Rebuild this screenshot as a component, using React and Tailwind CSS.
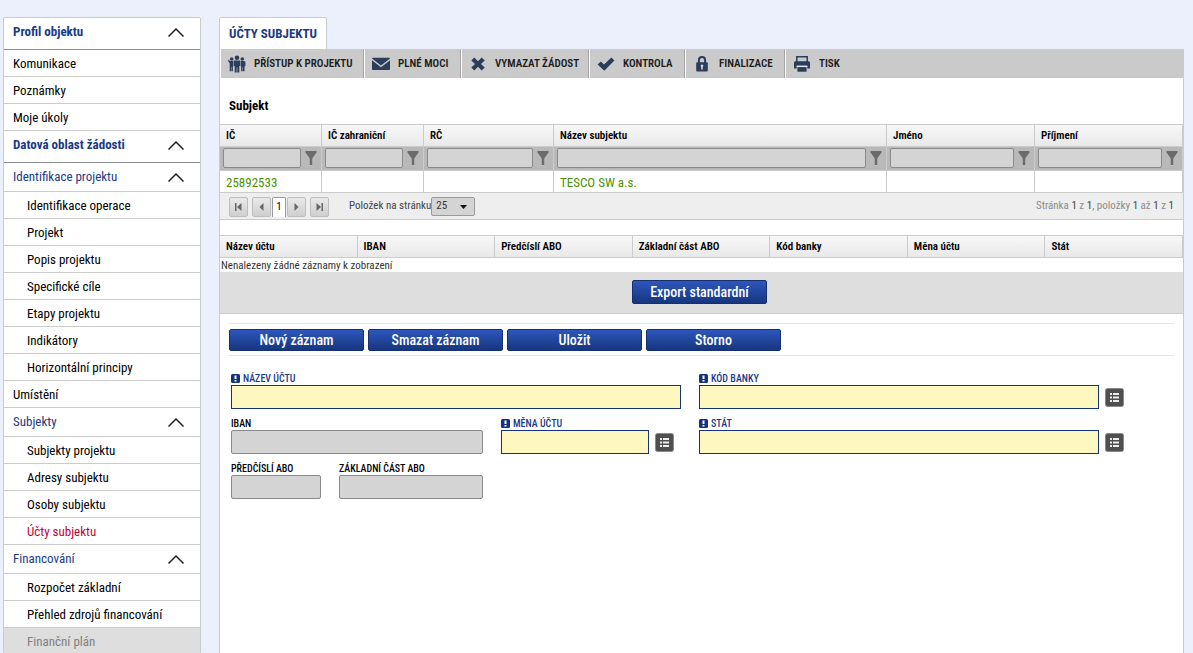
const menu = [
  { type: "root", label: "Profil objektu" },
  { type: "item", label: "Komunikace" },
  { type: "item", label: "Poznámky" },
  { type: "item", label: "Moje úkoly" },
  { type: "root", label: "Datová oblast žádosti" },
  { type: "group", label: "Identifikace projektu" },
  { type: "sub", label: "Identifikace operace" },
  { type: "sub", label: "Projekt" },
  { type: "sub", label: "Popis projektu" },
  { type: "sub", label: "Specifické cíle" },
  { type: "sub", label: "Etapy projektu" },
  { type: "sub", label: "Indikátory" },
  { type: "sub", label: "Horizontální principy" },
  { type: "item", label: "Umístění" },
  { type: "group", label: "Subjekty" },
  { type: "sub", label: "Subjekty projektu" },
  { type: "sub", label: "Adresy subjektu" },
  { type: "sub", label: "Osoby subjektu" },
  { type: "active", label: "Účty subjektu" },
  { type: "group", label: "Financování" },
  { type: "sub", label: "Rozpočet základní" },
  { type: "sub", label: "Přehled zdrojů financování" },
  { type: "disabled", label: "Finanční plán" },
];

const menuStyles = {
  root: "h-8 pl-[9px] pb-[3px] font-bold text-[#1b3a85] border-[#8c8c8c]",
  group: "h-[29px] pl-[9px] text-[#1b3a85] border-[#cbcbcb]",
  item: "h-[27px] pt-px pl-[9px] text-black border-[#cbcbcb]",
  sub: "h-[27px] pt-px pl-[23px] text-black border-[#cbcbcb]",
  active: "h-[27px] pt-px pl-[23px] text-[#cc0033] border-[#cbcbcb]",
  disabled: "h-[27px] pt-px pl-[23px] text-[#808080] bg-[#dedede] border-[#cbcbcb]",
};

const subjectColumns = [
  { label: "IČ", width: "w-[102px]", value: "25892533" },
  { label: "IČ zahraniční", width: "w-[102px]" },
  { label: "RČ", width: "w-[130px]" },
  { label: "Název subjektu", value: "TESCO SW a.s." },
  { label: "Jméno", width: "w-[148px]" },
  { label: "Příjmení", width: "w-[148px]" },
];

const accountColumns = [
  "Název účtu", "IBAN", "Předčíslí ABO", "Základní část ABO", "Kód banky", "Měna účtu", "Stát",
];

function PeopleIcon() {
  return (
    <svg width="18" height="18" viewBox="0 0 18 18" fill="#2b3d5b">
      <circle cx="9" cy="2.8" r="2.3" />
      <path d="M5.700 5.400h6.600v5.600h-1V17.500H9.300v-5h-.6v5H6.700V11h-1z" />
      <circle cx="3.700" cy="4" r="1.800" />
      <circle cx="14.300" cy="4" r="1.800" />
      <path d="M.3 4.400l1.900 1.500h3v5.500h-.3v4.800H3.400V12H3v4.200H1.700V8.200L.3 6.500z" />
      <path d="M12.800 5.900h3.200l1.400.8v4.500h-.9v5H15V12h-.4v4.200h-1.500v-4.800h-.3z" />
    </svg>
  );
}

function MailIcon() {
  return (
    <svg width="18" height="18" viewBox="0 0 18 18" fill="#2b3d5b">
      <path d="M0 3.400C0 3 .4 2.800.8 2.800h16.400c.4 0 .8.200.8.600L9 10.400z" />
      <path d="M0 5.200l9 7 9-7V14c0 .6-.4 1-1 1H1c-.6 0-1-.4-1-1z" />
    </svg>
  );
}

function CrossIcon() {
  return (
    <svg width="18" height="18" viewBox="0 0 18 18" fill="#2b3d5b">
      <path d="M5.300 2.600L9 6.200l3.700-3.600 3 2.900L12 9l3.700 3.500-3 2.900L9 11.800l-3.700 3.600-3-2.900L6 9 2.300 5.500z" />
    </svg>
  );
}

function CheckIcon() {
  return (
    <svg width="18" height="18" viewBox="0 0 18 18" fill="#2b3d5b">
      <path d="M.6 9.400l3.200-2.800L7 9.600l7.400-7 3 2.900L7.300 15.800z" />
    </svg>
  );
}

function LockIcon() {
  return (
    <svg width="18" height="18" viewBox="0 0 18 18">
      <path d="M5.900 8V5.200a3.100 3.100 0 0 1 6.200 0V8" fill="none" stroke="#2b3d5b" strokeWidth="2" />
      <rect x="3.200" y="7.200" width="11.600" height="9.400" rx="1" fill="#2b3d5b" />
      <path d="M9 9.400a1.400 1.400 0 0 1 .8 2.500V14.500H8.200v-2.600A1.400 1.400 0 0 1 9 9.400z" fill="#d5d5d5" />
    </svg>
  );
}

function PrintIcon() {
  return (
    <svg width="18" height="18" viewBox="0 0 18 18">
      <path d="M3.800 7V1.800h10.400V7" fill="#c3cad4" stroke="#2b3d5b" strokeWidth="1.500" />
      <path d="M2.600 6.300h12.800c1 0 1.600.7 1.600 1.600v5.600h-2.700V11H3.700v2.500H1V7.900c0-.9.600-1.600 1.600-1.600z" fill="#2b3d5b" />
      <path d="M3.700 10.600h10.600v1.500H3.700z" fill="#e8e8e8" />
      <path d="M4.400 12.100h9.200v4.600H4.400z" fill="#2b3d5b" />
    </svg>
  );
}

function FilterIcon() {
  return (
    <svg width="12" height="14" viewBox="0 0 12 14" fill="#6b6b6b">
      <path d="M.5 0h11v1.500L7.200 7.500V14H4.800V7.500L.5 1.500z" />
    </svg>
  );
}

const tools = [
  { label: "PŘÍSTUP K PROJEKTU", Icon: PeopleIcon, width: "w-[144px]" },
  { label: "PLNÉ MOCI", Icon: MailIcon, width: "w-[97px]" },
  { label: "VYMAZAT ŽÁDOST", Icon: CrossIcon, width: "w-32" },
  { label: "KONTROLA", Icon: CheckIcon, width: "w-24" },
  { label: "FINALIZACE", Icon: LockIcon, width: "w-[100px]" },
  { label: "TISK", Icon: PrintIcon, width: "w-24", last: true },
];

function Chevron() {
  return (
    <svg width="16" height="9" viewBox="0 0 16 9" fill="none" stroke="#222" strokeWidth="1.500">
      <path d="M.5 8.500L8 1l7.500 7.500" />
    </svg>
  );
}

function Sidebar() {
  return (
    <aside className="w-[198px] shrink-0 bg-white border border-[#cbcbcb] rounded-t-[2px]">
      <nav>
        {menu.map(({ type, label }) => (
          <a
            key={label}
            href="#"
            className={`flex items-center justify-between pr-4 border-b text-[13px] ${menuStyles[type]}`}
          >
            {label}
            {(type === "root" || type === "group") && <Chevron />}
          </a>
        ))}
      </nav>
    </aside>
  );
}

function Toolbar() {
  return (
    <div className="flex h-[29px] bg-[#cacaca]">
      {tools.map(({ label, Icon, width, last }) => (
        <button
          key={label}
          className={`flex items-center gap-2 pt-px pl-[7px] border-l border-l-white text-[11px] font-semibold text-[#1c1c1c] whitespace-nowrap ${width} ${last ? "" : "border-r border-r-[#a5a5a5]"}`}
        >
          <Icon />
          {label}
        </button>
      ))}
    </div>
  );
}

const headCell = "h-[23px] pt-[2px] pl-[6px] text-left text-[11px] font-semibold text-black border-r border-y border-[#cbcbcb]";

function SubjectTable() {
  return (
    <table className="w-full table-fixed border-separate border-spacing-0">
      <thead>
        <tr className="bg-linear-to-b from-[#f8f8f8] to-[#e8e8e8]">
          {subjectColumns.map((c) => (
            <th key={c.label} className={`${headCell} ${c.width || ""}`}>{c.label}</th>
          ))}
        </tr>
        <tr className="bg-[#b9b9b9]">
          {subjectColumns.map((c) => (
            <td key={c.label} className="h-6 pt-px pl-[3px] pr-1 align-top border-r border-b border-[#cbcbcb]">
              <div className="flex items-center gap-1">
                <input
                  aria-label={`Filtr ${c.label}`}
                  className="h-5 flex-1 min-w-0 px-1 text-[11px] bg-[#d4d4d4] border border-[#8a8a8a] rounded-[2px]"
                />
                <button title="Filtrovat">
                  <FilterIcon />
                </button>
              </div>
            </td>
          ))}
        </tr>
      </thead>
      <tbody>
        <tr>
          {subjectColumns.map((c) => (
            <td key={c.label} className="h-[22px] pt-[2px] pl-[6px] leading-[19px] text-[13px] text-[#4a9300] border-r border-b border-[#cbcbcb]">
              {c.value}
            </td>
          ))}
        </tr>
      </tbody>
    </table>
  );
}

function PagerButton({ title, path }) {
  return (
    <button
      title={title}
      className="w-[19px] h-5 flex items-center justify-center bg-linear-to-b from-[#e9e9e9] to-[#cfcfcf] border border-[#bdbdbd] rounded-[2px]"
    >
      <svg width="9" height="10" viewBox="0 0 9 10" fill="#666">
        <path d={path} />
      </svg>
    </button>
  );
}

function Pager() {
  return (
    <div className="flex items-center h-[27px] pt-px px-[9px] bg-[#eee] border-b border-[#cbcbcb] text-[11px] text-[#444]">
      <div className="flex items-center gap-1">
        <PagerButton title="První" path="M1 1h1.500v8H1zM7.500 1v8L3 5z" />
        <div className="flex items-center gap-px">
          <PagerButton title="Předchozí" path="M6.500 1v8L2.500 5z" />
          <span className="w-[14px] h-5 text-center leading-[18px] bg-white text-black border border-b-0 border-[#999] rounded-t-[2px]">1</span>
          <PagerButton title="Další" path="M2.500 1v8l4-4z" />
        </div>
        <PagerButton title="Poslední" path="M1.500 1v8L6 5zM6.500 1H8v8H6.500z" />
      </div>
      <label htmlFor="page-size" className="ml-5">Položek na stránku</label>
      <div className="relative">
        <select
          id="page-size"
          defaultValue="25"
          className="block appearance-none w-11 h-[19px] pl-1 text-[11px] text-[#333] bg-[#d4d4d4] border border-[#999] rounded-[2px]"
        >
          <option>25</option>
          <option>50</option>
        </select>
        <svg width="7" height="4" viewBox="0 0 7 4" className="absolute right-2 top-2 pointer-events-none">
          <path d="M0 0h7L3.500 4z" fill="#111" />
        </svg>
      </div>
      <p className="ml-auto text-[#8c8c8c]">
        Stránka <b className="font-normal text-[#444]">1</b> z <b className="font-normal text-[#444]">1</b>, položky{" "}
        <b className="font-normal text-[#444]">1</b> až <b className="font-normal text-[#444]">1</b> z{" "}
        <b className="font-normal text-[#444]">1</b>
      </p>
    </div>
  );
}

function AccountTable() {
  return (
    <table className="w-full mt-[15px] table-fixed border-separate border-spacing-0">
      <thead>
        <tr className="bg-linear-to-b from-[#f8f8f8] to-[#e8e8e8]">
          {accountColumns.map((c) => (
            <th key={c} className={headCell}>{c}</th>
          ))}
        </tr>
      </thead>
      <tbody>
        <tr>
          <td colSpan={7} className="pt-px pl-px h-[14px] leading-[13px] text-[11px] text-[#333]">
            Nenalezeny žádné záznamy k zobrazení
          </td>
        </tr>
      </tbody>
    </table>
  );
}

function BlueButton({ children, className }) {
  return (
    <button
      className={`w-[135px] text-[14px] leading-5 font-medium text-white bg-linear-to-b from-[#2d57bd] to-[#17367e] border border-[#15306f] rounded-[2px] ${className}`}
    >
      {children}
    </button>
  );
}

function Field({ id, label, required, picker, className }) {
  return (
    <div className={`min-w-0 ${className || ""}`}>
      <label
        htmlFor={id}
        className={`flex items-center gap-[3px] h-[13px] text-[10px] leading-[13px] font-medium whitespace-nowrap ${required ? "text-[#1b3a85]" : "text-black"}`}
      >
        {required && (
          <svg width="9" height="9" viewBox="0 0 9 9" aria-hidden="true">
            <rect width="9" height="9" rx="1.500" fill="#15327a" />
            <path d="M3.500 1.500h2v3.500h-2zM3.500 6h2v1.500h-2z" fill="#fff" />
          </svg>
        )}
        {label}
      </label>
      <div className="flex items-center gap-[6px]">
        <input
          id={id}
          disabled={!required}
          className={`flex-1 min-w-0 h-6 px-1 text-[13px] border ${required ? "bg-[#fef8c0] border-[#15327a]" : "bg-[#d4d4d4] border-[#8a8a8a] rounded-[2px]"}`}
        />
        {picker && (
          <button title="Vybrat">
            <svg width="19" height="19" viewBox="0 0 19 19">
              <rect x=".5" y=".5" width="18" height="18" rx="2" fill="#4f4f4f" stroke="#8a8a8a" />
              <path d="M5 5h2v2H5zM8 5h6v2H8zM5 8.500h2v2H5zM8 8.500h6v2H8zM5 12h2v2H5zM8 12h6v2H8z" fill="#eee" />
            </svg>
          </button>
        )}
      </div>
    </div>
  );
}

function AccountForm() {
  return (
    <form className="grid grid-cols-[90fr_144fr_180fr_425fr] gap-x-[18px] gap-y-2 pt-4 pl-[11px] pr-[59px]">
      <Field id="name" label="NÁZEV ÚČTU" required className="col-span-3" />
      <Field id="bank" label="KÓD BANKY" required picker />
      <Field id="iban" label="IBAN" className="col-span-2" />
      <Field id="currency" label="MĚNA ÚČTU" required picker className="pr-[7px]" />
      <Field id="country" label="STÁT" required picker />
      <Field id="prefix" label="PŘEDČÍSLÍ ABO" />
      <Field id="base" label="ZÁKLADNÍ ČÁST ABO" />
    </form>
  );
}

export default function App() {
  return (
    <div className="flex gap-[18px] h-screen overflow-hidden pt-[17px] pl-[3px] pr-[9px] bg-[#ecf0fd] font-['Roboto_Condensed',Roboto,sans-serif]">
      <Sidebar />
      <main className="flex-1 min-w-0 flex flex-col">
        <h1 className="self-start h-8 px-[9px] leading-8 text-[13px] font-bold text-[#1b3a85] bg-white border border-b-0 border-[#cbcbcb] rounded-t-[2px]">
          ÚČTY SUBJEKTU
        </h1>
        <div className="flex-1 bg-white border-x border-[#cbcbcb]">
          <Toolbar />
          <h2 className="h-[46px] pt-[18px] pl-[9px] leading-5 text-[13px] font-bold text-black">Subjekt</h2>
          <SubjectTable />
          <Pager />
          <AccountTable />
          <div className="flex justify-center h-[42px] pt-2 pr-1 bg-[#dedede] border-b border-[#cbcbcb]">
            <BlueButton className="h-6">Export standardní</BlueButton>
          </div>
          <div className="flex gap-1 mt-[9px] mx-[9px] pt-[5px] pb-1 border-y border-[#e3e3e3]">
            <BlueButton className="h-[22px]">Nový záznam</BlueButton>
            <BlueButton className="h-[22px]">Smazat záznam</BlueButton>
            <BlueButton className="h-[22px]">Uložit</BlueButton>
            <BlueButton className="h-[22px]">Storno</BlueButton>
          </div>
          <AccountForm />
        </div>
      </main>
    </div>
  );
}
